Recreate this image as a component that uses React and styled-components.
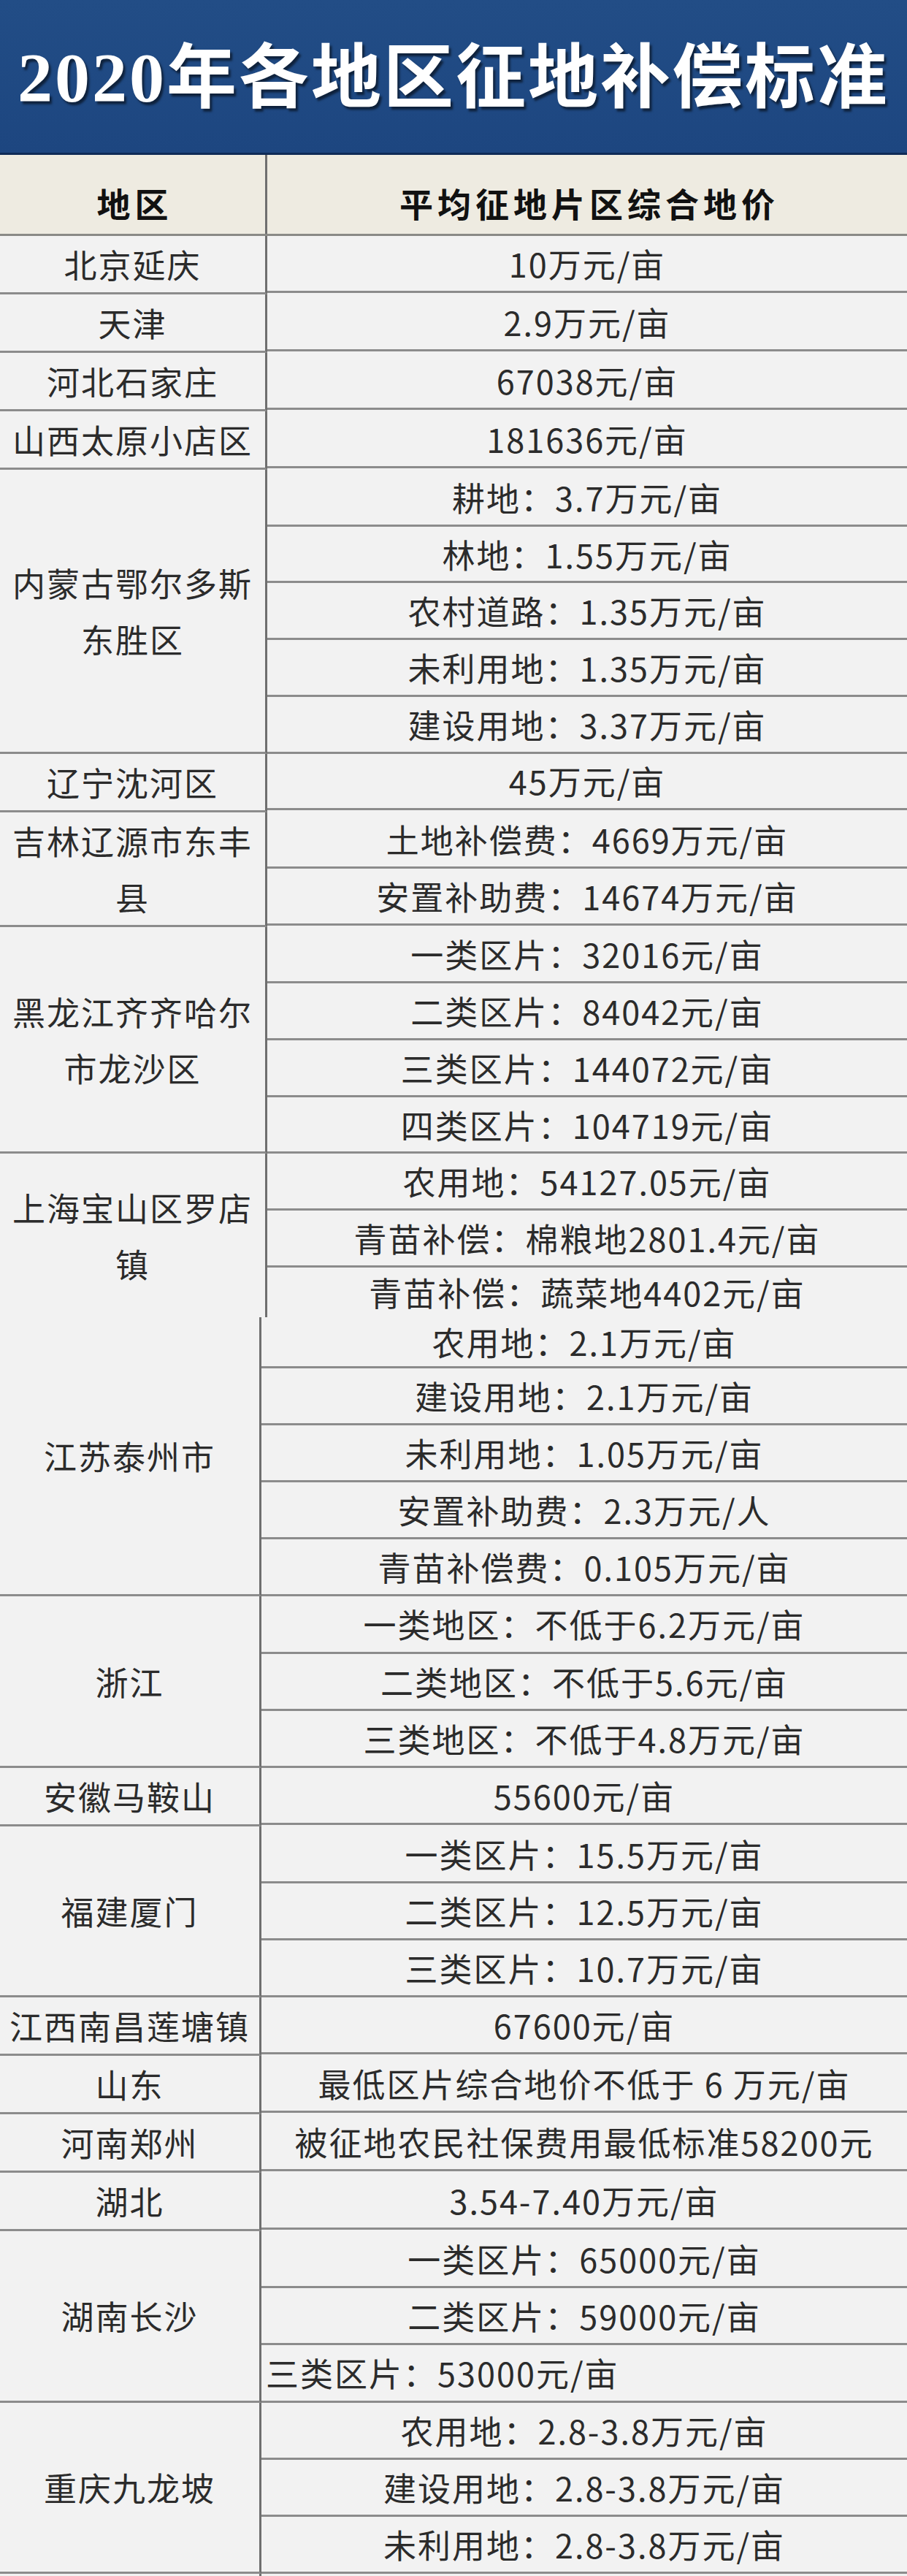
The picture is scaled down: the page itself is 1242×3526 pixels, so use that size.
import React from 'react';
import styled, { createGlobalStyle } from 'styled-components';

const GlobalStyle = createGlobalStyle`
  html, body {
    margin: 0;
    padding: 0;
    background: #f2f2f2;
    overflow: hidden;
  }
  body {
    font-family: "Noto Sans CJK SC", "Noto Sans", sans-serif;
  }
  * { box-sizing: border-box; }
`;

const Page = styled.div`
  width: 1242px;
  height: 3526px;
  overflow: hidden;
  background: #f2f2f2;
`;

const TitleBar = styled.header`
  height: 212px;
  background: linear-gradient(#224d86, #1d4680);
  border-bottom: 3px solid #0f2b56;
  display: flex;
  align-items: center;
  justify-content: center;
  padding-bottom: 14px;
`;

const Title = styled.h1`
  margin: 0;
  font-family: "Liberation Serif", "Noto Sans CJK SC", serif;
  font-weight: 700;
  font-size: 96px;
  letter-spacing: 3px;
  color: #ffffff;
  text-shadow: 3px 4px 3px rgba(0, 0, 0, 0.55);
  white-space: nowrap;
`;

const HeadRow = styled.div`
  display: grid;
  grid-template-columns: 366px 1fr;
  height: 111px;
  background: #eeebe1;
  border-bottom: 3px solid #8a8a86;
`;

const HeadCell = styled.div`
  display: flex;
  align-items: center;
  justify-content: center;
  padding-top: 22px;
  padding-left: 6px;
  font-weight: 700;
  font-size: 46px;
  letter-spacing: 6px;
  color: #111111;
  border-right: ${(p) => (p.$divider ? '3px solid #6f6f6f' : 'none')};
`;

const Segment = styled.section`
  display: flex;
  flex-direction: column;
`;

const Section = styled.div`
  display: grid;
  grid-template-columns: ${(p) => p.$col}px 1fr;
`;

const RegionCell = styled.div`
  display: flex;
  align-items: center;
  justify-content: center;
  text-align: center;
  padding: 0 8px;
  border-right: 3px solid #6f6f6f;
  border-bottom: ${(p) => (p.$open ? 'none' : '3px solid #8c8c8c')};
  font-size: 45px;
  letter-spacing: 2px;
  line-height: 77px;
  color: #2b2b2b;
`;

const Values = styled.div`
  display: flex;
  flex-direction: column;
`;

const ValueRow = styled.div`
  height: ${(p) => p.$h}px;
  display: flex;
  align-items: center;
  justify-content: ${(p) => (p.$left ? 'flex-start' : 'center')};
  padding: 0 6px;
  border-bottom: ${(p) => (p.$open ? 'none' : '3px solid #8c8c8c')};
  font-size: 45px;
  letter-spacing: 2px;
  color: #2b2b2b;
  white-space: nowrap;
`;

const TOP_H = 77.72;
const BOTTOM_H = 78.14;

const topData = [
  { region: '北京延庆', values: ['10万元/亩'] },
  { region: '天津', values: ['2.9万元/亩'] },
  { region: '河北石家庄', values: ['67038元/亩'] },
  { region: '山西太原小店区', values: ['181636元/亩'] },
  {
    region: '内蒙古鄂尔多斯东胜区',
    values: ['耕地：3.7万元/亩', '林地：1.55万元/亩', '农村道路：1.35万元/亩', '未利用地：1.35万元/亩', '建设用地：3.37万元/亩'],
  },
  { region: '辽宁沈河区', values: ['45万元/亩'] },
  { region: '吉林辽源市东丰县', values: ['土地补偿费：4669万元/亩', '安置补助费：14674万元/亩'] },
  {
    region: '黑龙江齐齐哈尔市龙沙区',
    values: ['一类区片：32016元/亩', '二类区片：84042元/亩', '三类区片：144072元/亩', '四类区片：104719元/亩'],
  },
  {
    region: '上海宝山区罗店镇',
    open: true,
    values: ['农用地：54127.05元/亩', '青苗补偿：棉粮地2801.4元/亩', { text: '青苗补偿：蔬菜地4402元/亩', h: 68, open: true }],
  },
];

const bottomData = [
  {
    region: '江苏泰州市',
    values: [{ text: '农用地：2.1万元/亩', h: 70 }, '建设用地：2.1万元/亩', '未利用地：1.05万元/亩', '安置补助费：2.3万元/人', '青苗补偿费：0.105万元/亩'],
  },
  { region: '浙江', values: ['一类地区：不低于6.2万元/亩', '二类地区：不低于5.6元/亩', '三类地区：不低于4.8万元/亩'] },
  { region: '安徽马鞍山', values: ['55600元/亩'] },
  { region: '福建厦门', values: ['一类区片：15.5万元/亩', '二类区片：12.5万元/亩', '三类区片：10.7万元/亩'] },
  { region: '江西南昌莲塘镇', values: ['67600元/亩'] },
  { region: '山东', values: ['最低区片综合地价不低于 6 万元/亩'] },
  { region: '河南郑州', values: ['被征地农民社保费用最低标准58200元'] },
  { region: '湖北', values: ['3.54-7.40万元/亩'] },
  { region: '湖南长沙', values: ['一类区片：65000元/亩', '二类区片：59000元/亩', { text: '三类区片：53000元/亩', left: true }] },
  { region: '重庆九龙坡', values: ['农用地：2.8-3.8万元/亩', '建设用地：2.8-3.8万元/亩', '未利用地：2.8-3.8万元/亩'] },
  { region: '四川广元苍溪', values: ['33400元/亩'] },
];

function Table({ data, col, rowH }) {
  return (
    <Segment>
      {data.map((item) => (
        <Section key={item.region} $col={col}>
          <RegionCell $open={item.open}>{item.region}</RegionCell>
          <Values>
            {item.values.map((v, i) => {
              const val = typeof v === 'string' ? { text: v } : v;
              return (
                <ValueRow key={i} $h={val.h || rowH} $left={val.left} $open={val.open}>
                  {val.text}
                </ValueRow>
              );
            })}
          </Values>
        </Section>
      ))}
    </Segment>
  );
}

export default function App() {
  return (
    <>
      <GlobalStyle />
      <Page>
        <TitleBar>
          <Title>2020年各地区征地补偿标准</Title>
        </TitleBar>
        <HeadRow>
          <HeadCell $divider>地区</HeadCell>
          <HeadCell>平均征地片区综合地价</HeadCell>
        </HeadRow>
        <Table data={topData} col={366} rowH={TOP_H} />
        <Table data={bottomData} col={358} rowH={BOTTOM_H} />
      </Page>
    </>
  );
}
